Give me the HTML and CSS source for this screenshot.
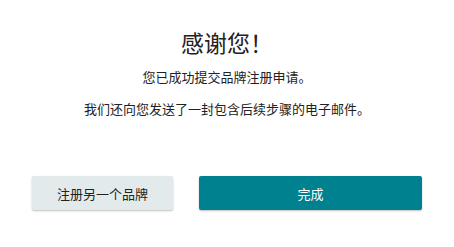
FILE: index.html
```html
<!DOCTYPE html>
<html lang="zh-CN">
<head>
<meta charset="utf-8">
<link rel="stylesheet" href="styles.css">
</head>
<body>
<main class="page">
  <h1 class="title">感谢您！</h1>
  <p class="msg msg-first">您已成功提交品牌注册申请。</p>
  <p class="msg msg-second">我们还向您发送了一封包含后续步骤的电子邮件。</p>
  <div class="actions">
    <button class="btn btn-secondary" type="button">注册另一个品牌</button>
    <button class="btn btn-primary" type="button">完成</button>
  </div>
</main>
</body>
</html>
```
FILE: styles.css
```css
html, body {
  margin: 0;
  padding: 0;
  background: #ffffff;
}
body {
  font-family: "Noto Sans CJK SC", "Noto Sans", sans-serif;
  color: #222222;
}
.page {
  width: 454px;
  height: 247px;
  box-sizing: border-box;
  padding: 27px 32px 0 32px;
  display: flex;
  flex-direction: column;
  align-items: center;
}
.title {
  margin: 0;
  font-size: 23px;
  line-height: 30px;
  font-weight: 400;
  color: #222222;
}
.msg {
  margin: 0;
  font-size: 13px;
  line-height: 20px;
  color: #222222;
}
.msg-first {
  margin-top: 10px;
}
.msg-second {
  margin-top: 12px;
}
.actions {
  margin-top: 57px;
  width: 100%;
  display: flex;
  gap: 26px;
}
.btn {
  height: 34px;
  border: none;
  border-radius: 2px;
  font-family: "Noto Sans CJK SC", "Noto Sans", sans-serif;
  font-size: 13px;
  padding: 0;
  box-shadow: 0 1px 2px rgba(0, 0, 0, 0.25);
  cursor: pointer;
}
.btn-secondary {
  width: 141px;
  background: #e2eaeb;
  color: #222222;
}
.btn-primary {
  flex: 1;
  background: #00818f;
  color: #ffffff;
}
```
